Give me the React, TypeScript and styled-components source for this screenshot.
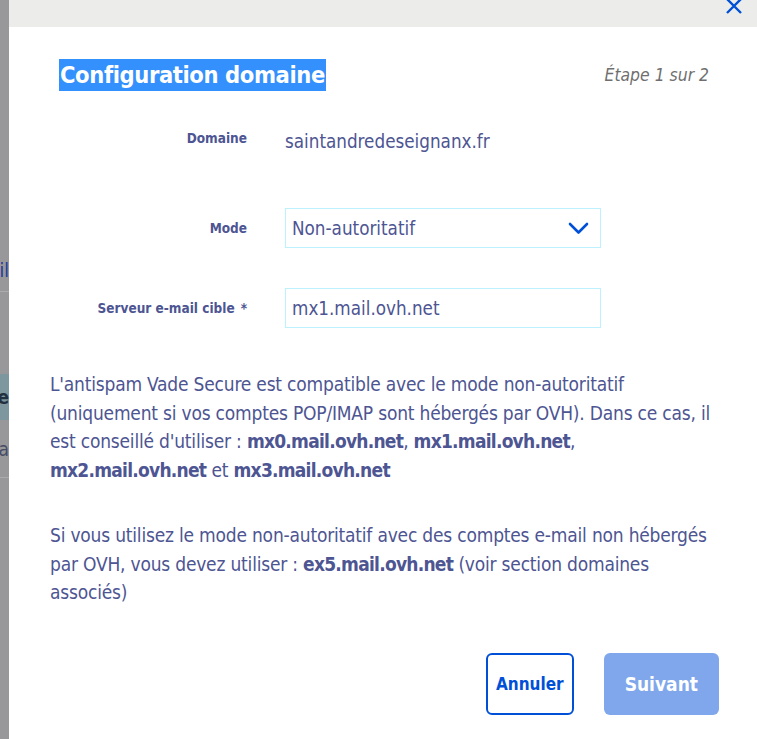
import styled, { createGlobalStyle } from "styled-components";

const GlobalStyle = createGlobalStyle`
  html, body {
    margin: 0;
    padding: 0;
    background: #98989a;
  }
  * {
    box-sizing: border-box;
  }
`;

const FONT = `"Liberation Sans Narrow", "DejaVu Sans Condensed", "Liberation Sans", sans-serif`;
const TEXT = "#4d5592";
const BLUE = "#0050d7";

const Page = styled.div`
  display: flex;
  height: 739px;
  overflow: hidden;
  font-family: ${FONT};
`;

// the page behind the modal, only a thin strip of it shows
const Backdrop = styled.div`
  width: 9px;
  flex-shrink: 0;
  display: flex;
  flex-direction: column;
  overflow: hidden;
  background: #98989a;
`;

const BackdropRow = styled.div<{ $height: number; $bg?: string; $line?: boolean }>`
  height: ${(p) => p.$height}px;
  flex-shrink: 0;
  display: flex;
  align-items: center;
  justify-content: flex-end;
  background: ${(p) => p.$bg || "transparent"};
  border-bottom: ${(p) => (p.$line ? "1px solid #a9abae" : "none")};
`;

const BackdropText = styled.span<{ $color: string; $bold?: boolean }>`
  font-size: 19px;
  white-space: nowrap;
  color: ${(p) => p.$color};
  font-weight: ${(p) => (p.$bold ? 700 : 400)};
`;

const Modal = styled.div`
  flex: 1;
  background: #fff;
  display: flex;
  flex-direction: column;
`;

const ModalTop = styled.div`
  height: 27px;
  background: #ecedeb;
  display: flex;
  justify-content: flex-end;
  align-items: flex-start;
  padding-right: 14px;
`;

const CloseButton = styled.button`
  border: none;
  background: none;
  padding: 0;
  margin-top: -2px;
  width: 18px;
  height: 18px;
  display: flex;
  cursor: pointer;
`;

const ModalBody = styled.div`
  padding: 32px 38px 0 41px;
`;

const TitleRow = styled.div`
  display: flex;
  justify-content: space-between;
  align-items: center;
  height: 32px;
`;

const Title = styled.h1`
  margin: 0 0 0 9px;
  font-size: 23.5px;
  letter-spacing: -0.4px;
  line-height: 32px;
  font-weight: 700;
  color: #fff;
  background: #3390fc;
  padding: 0 1px;
`;

const Step = styled.span`
  font-size: 17.4px;
  font-style: italic;
  color: #6f6f6f;
  margin-right: 10px;
`;

const Form = styled.div`
  margin-top: 31px;
  display: flex;
  flex-direction: column;
`;

const FormRow = styled.div<{ $after: number }>`
  display: grid;
  grid-template-columns: 197px 316px;
  column-gap: 38px;
  align-items: center;
  margin-bottom: ${(p) => p.$after}px;
`;

const Label = styled.label<{ $lift?: number }>`
  text-align: right;
  font-size: 13.5px;
  font-weight: 700;
  color: ${TEXT};
  margin-top: ${(p) => -(p.$lift || 0)}px;
`;

const Required = styled.span`
  margin-left: 6px;
`;

const Value = styled.div`
  font-size: 18.7px;
  line-height: 40px;
  color: ${TEXT};
`;

const Field = styled.div`
  height: 40px;
  border: 1px solid #bef1ff;
  display: flex;
  align-items: center;
  justify-content: space-between;
  padding: 0 11px 0 6px;
  font-size: 18.7px;
  color: ${TEXT};
`;

const Paragraph = styled.p<{ $top: number }>`
  margin: ${(p) => p.$top}px 0 0;
  font-size: 19px;
  letter-spacing: -0.2px;
  line-height: 28.5px;
  color: ${TEXT};

  strong {
    font-weight: 700;
    letter-spacing: -0.75px;
  }
`;

const Actions = styled.div`
  margin-top: 46px;
  display: flex;
  justify-content: flex-end;
  gap: 30px;
`;

const Button = styled.button<{ $primary?: boolean }>`
  height: 62px;
  padding: 0 ${(p) => (p.$primary ? 19 : 8)}px;
  border-radius: 6px;
  font-family: ${FONT};
  font-weight: 700;
  font-size: ${(p) => (p.$primary ? 19 : 17)}px;
  border: 2px solid ${(p) => (p.$primary ? "transparent" : BLUE)};
  background: ${(p) => (p.$primary ? "#80a7eb" : "#fff")};
  color: ${(p) => (p.$primary ? "#fff" : BLUE)};
`;

const CloseIcon = () => (
  <svg width="18" height="18" viewBox="0 0 18 18">
    <path d="M2 1 L16 15 M16 1 L2 15" stroke={BLUE} strokeWidth="2.4" fill="none" />
  </svg>
);

const Chevron = () => (
  <svg width="21" height="13" viewBox="0 0 21 13">
    <path d="M2 2 L10.5 10.5 L19 2" stroke={BLUE} strokeWidth="2.6" fill="none" strokeLinecap="round" strokeLinejoin="round" />
  </svg>
);

export default function App() {
  return (
    <>
      <GlobalStyle />
      <Page>
        <Backdrop>
          <BackdropRow $height={248} />
          <BackdropRow $height={44} $line>
            <BackdropText $color="#24399a">il</BackdropText>
          </BackdropRow>
          <BackdropRow $height={82} />
          <BackdropRow $height={46} $bg="#7e979e">
            <BackdropText $color="#23303f" $bold>
              e
            </BackdropText>
          </BackdropRow>
          <BackdropRow $height={58} $line>
            <BackdropText $color="#454c66">a</BackdropText>
          </BackdropRow>
        </Backdrop>

        <Modal>
          <ModalTop>
            <CloseButton aria-label="Fermer">
              <CloseIcon />
            </CloseButton>
          </ModalTop>

          <ModalBody>
            <TitleRow>
              <Title>Configuration domaine</Title>
              <Step>Étape 1 sur 2</Step>
            </TitleRow>

            <Form>
              <FormRow $after={46}>
                <Label $lift={8}>Domaine</Label>
                <Value>saintandredeseignanx.fr</Value>
              </FormRow>
              <FormRow $after={40}>
                <Label>Mode</Label>
                <Field>
                  Non-autoritatif
                  <Chevron />
                </Field>
              </FormRow>
              <FormRow $after={0}>
                <Label>
                  Serveur e-mail cible<Required>*</Required>
                </Label>
                <Field>mx1.mail.ovh.net</Field>
              </FormRow>
            </Form>

            <Paragraph $top={42}>
              L'antispam Vade Secure est compatible avec le mode non-autoritatif (uniquement si vos
              comptes POP/IMAP sont hébergés par OVH). Dans ce cas, il est conseillé d'utiliser :{" "}
              <strong>mx0.mail.ovh.net</strong>, <strong>mx1.mail.ovh.net</strong>,{" "}
              <strong>mx2.mail.ovh.net</strong> et <strong>mx3.mail.ovh.net</strong>
            </Paragraph>
            <Paragraph $top={37}>
              Si vous utilisez le mode non-autoritatif avec des comptes e-mail non hébergés par OVH,
              vous devez utiliser : <strong>ex5.mail.ovh.net</strong> (voir section domaines
              associés)
            </Paragraph>

            <Actions>
              <Button>Annuler</Button>
              <Button $primary>Suivant</Button>
            </Actions>
          </ModalBody>
        </Modal>
      </Page>
    </>
  );
}
